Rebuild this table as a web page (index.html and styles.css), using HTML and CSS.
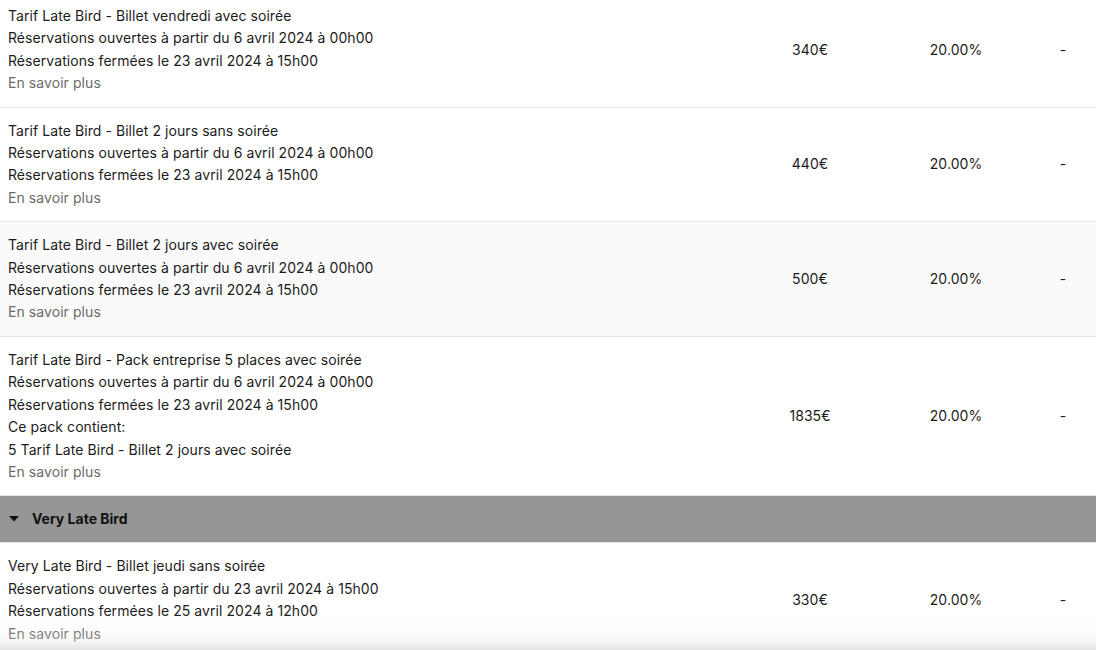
FILE: index.html
```html
<!DOCTYPE html>
<html lang="fr">
<head>
<meta charset="utf-8">
<link rel="stylesheet" href="styles.css">
</head>
<body>
<div class="table">
  <div class="row first">
    <div class="name">
      <div>Tarif Late Bird - Billet vendredi avec soirée</div>
      <div>Réservations ouvertes à partir du 6 avril 2024 à 00h00</div>
      <div>Réservations fermées le 23 avril 2024 à 15h00</div>
      <div class="more">En savoir plus</div>
    </div>
    <div class="cell">340€</div>
    <div class="cell">20.00%</div>
    <div class="cell">-</div>
  </div>
  <div class="row">
    <div class="name">
      <div>Tarif Late Bird - Billet 2 jours sans soirée</div>
      <div>Réservations ouvertes à partir du 6 avril 2024 à 00h00</div>
      <div>Réservations fermées le 23 avril 2024 à 15h00</div>
      <div class="more">En savoir plus</div>
    </div>
    <div class="cell">440€</div>
    <div class="cell">20.00%</div>
    <div class="cell">-</div>
  </div>
  <div class="row alt">
    <div class="name">
      <div>Tarif Late Bird - Billet 2 jours avec soirée</div>
      <div>Réservations ouvertes à partir du 6 avril 2024 à 00h00</div>
      <div>Réservations fermées le 23 avril 2024 à 15h00</div>
      <div class="more">En savoir plus</div>
    </div>
    <div class="cell">500€</div>
    <div class="cell">20.00%</div>
    <div class="cell">-</div>
  </div>
  <div class="row">
    <div class="name">
      <div>Tarif Late Bird - Pack entreprise 5 places avec soirée</div>
      <div>Réservations ouvertes à partir du 6 avril 2024 à 00h00</div>
      <div>Réservations fermées le 23 avril 2024 à 15h00</div>
      <div>Ce pack contient:</div>
      <div>5 Tarif Late Bird - Billet 2 jours avec soirée</div>
      <div class="more">En savoir plus</div>
    </div>
    <div class="cell">1835€</div>
    <div class="cell">20.00%</div>
    <div class="cell">-</div>
  </div>
  <div class="group">
    <svg class="caret" width="10" height="6" viewBox="0 0 10 6"><path d="M0 0h10L5 5.5z" fill="#111"/></svg>
    <span>Very Late Bird</span>
  </div>
  <div class="row">
    <div class="name">
      <div>Very Late Bird - Billet jeudi sans soirée</div>
      <div>Réservations ouvertes à partir du 23 avril 2024 à 15h00</div>
      <div>Réservations fermées le 25 avril 2024 à 12h00</div>
      <div class="more">En savoir plus</div>
    </div>
    <div class="cell">330€</div>
    <div class="cell">20.00%</div>
    <div class="cell">-</div>
  </div>
</div>
<div class="fade"></div>
</body>
</html>
```
FILE: styles.css
```css
html, body {
  margin: 0;
  padding: 0;
  background: #fff;
  overflow: hidden;
}
body {
  font-family: Inter, "Liberation Sans", sans-serif;
  font-size: 14px;
  line-height: 22.4px;
  letter-spacing: 0.07px;
  color: #1c1c1c;
}
.table {
  margin-top: -7px;
}
.row {
  display: grid;
  grid-template-columns: 1fr 144px 148px 66px;
  align-items: center;
  padding: 12px 0 12px 8px;
  border-bottom: 1px solid #e6e6e6;
  background: #fff;
}
.row.alt {
  background: #fafafa;
}
.cell {
  text-align: center;
}
.more {
  color: #6b6b6b;
}
.group {
  display: flex;
  align-items: center;
  gap: 13px;
  height: 46px;
  padding-left: 9px;
  background: #969696;
  border-bottom: 1px solid #e6e6e6;
  font-weight: 700;
  letter-spacing: 0;
  color: #111;
}
.fade {
  position: fixed;
  left: 0;
  right: 0;
  bottom: 0;
  height: 40px;
  background: linear-gradient(to bottom, rgba(232,232,232,0) 0%, rgba(232,232,232,0.12) 55%, rgba(230,230,230,0.4) 80%, rgba(228,228,228,1) 100%);
  pointer-events: none;
}
```
